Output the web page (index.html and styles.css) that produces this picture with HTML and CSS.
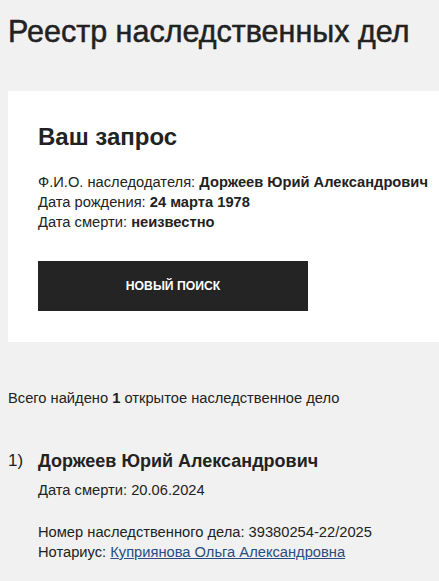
FILE: index.html
```html
<!DOCTYPE html>
<html lang="ru">
<head>
    <meta charset="UTF-8">
    <meta name="viewport" content="width=device-width, initial-scale=1.0">
    <title>Реестр наследственных дел</title>
    <link rel="stylesheet" href="styles.css">
</head>
<body>
    <h1 class="page-title">Реестр наследственных дел</h1>

    <div class="query-card">
        <h2>Ваш запрос</h2>
        <div class="query-info">
            <div>Ф.И.О. наследодателя: <b>Доржеев Юрий Александрович</b></div>
            <div>Дата рождения: <b>24 марта 1978</b></div>
            <div>Дата смерти: <b>неизвестно</b></div>
        </div>
        <button class="search-button">НОВЫЙ ПОИСК</button>
    </div>

    <p class="total">Всего найдено <b>1</b> открытое наследственное дело</p>

    <ol class="results">
        <li class="result">
            <span class="result-num">1)</span>
            <div class="result-body">
                <div class="result-name">Доржеев Юрий Александрович</div>
                <div class="result-death">Дата смерти: 20.06.2024</div>
                <div class="result-case">
                    <div>Номер наследственного дела: 39380254-22/2025</div>
                    <div>Нотариус: <a href="#">Куприянова Ольга Александровна</a></div>
                </div>
            </div>
        </li>
    </ol>
</body>
</html>
```

FILE: styles.css
```css
body {
    font-family: 'Liberation Sans', Arial, sans-serif;
    background-color: #f1f1f1;
    color: #222222;
    margin: 0;
    padding: 0 0 0 8px;
    overflow: hidden;
}
.page-title {
    font-size: 30.5px;
    font-weight: 400;
    line-height: 36px;
    margin: 13px 0 42px;
    -webkit-text-stroke: 0.5px #222222;
}
.query-card {
    background: #ffffff;
    padding: 32px 0 31px 30px;
}
.query-card h2 {
    font-size: 24px;
    font-weight: 700;
    line-height: 28px;
    margin: 0 0 21px;
}
.query-info {
    font-size: 14.7px;
    line-height: 20px;
}
.search-button {
    display: block;
    margin-top: 29px;
    width: 270px;
    height: 50px;
    background-color: #242424;
    color: #ffffff;
    border: none;
    font-family: inherit;
    font-size: 12.2px;
    font-weight: 700;
    cursor: pointer;
}
.total {
    font-size: 14.7px;
    line-height: 20px;
    margin: 46px 0 0;
}
.results {
    list-style: none;
    margin: 42px 0 0;
    padding: 0;
}
.result {
    display: flex;
}
.result-num {
    width: 30px;
    font-size: 17px;
    line-height: 22px;
}
.result-name {
    font-size: 18px;
    font-weight: 700;
    line-height: 22px;
}
.result-death,
.result-case {
    font-size: 14.7px;
    line-height: 20px;
}
.result-death {
    margin-top: 8px;
}
.result-case {
    margin-top: 22px;
}
.result-case a {
    color: #2b4c82;
}
```
